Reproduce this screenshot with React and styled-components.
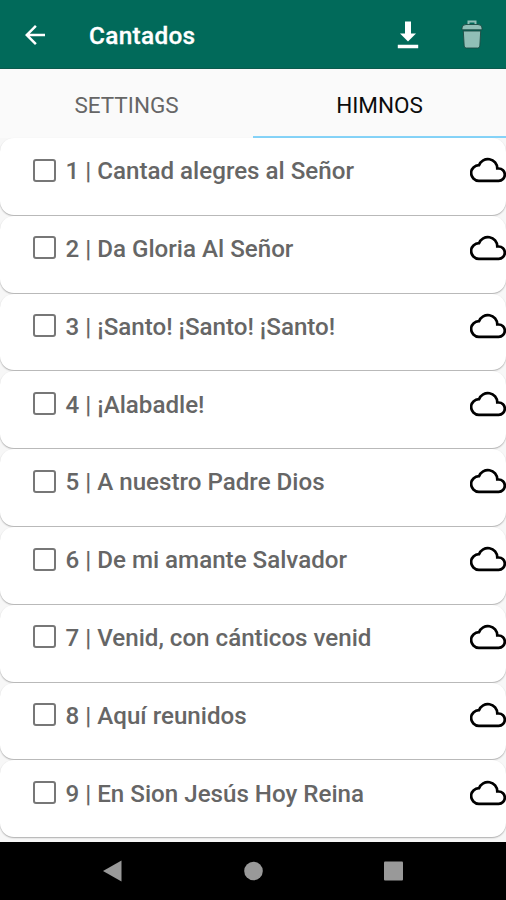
import React from 'react';
import styled, { createGlobalStyle } from 'styled-components';

const hymns = [
  { id: 1, title: 'Cantad alegres al Señor' },
  { id: 2, title: 'Da Gloria Al Señor' },
  { id: 3, title: '¡Santo! ¡Santo! ¡Santo!' },
  { id: 4, title: '¡Alabadle!' },
  { id: 5, title: 'A nuestro Padre Dios' },
  { id: 6, title: 'De mi amante Salvador' },
  { id: 7, title: 'Venid, con cánticos venid' },
  { id: 8, title: 'Aquí reunidos' },
  { id: 9, title: 'En Sion Jesús Hoy Reina' },
];

const GlobalStyle = createGlobalStyle`
  * {
    box-sizing: border-box;
  }

  body {
    margin: 0;
    font-family: Roboto, 'Liberation Sans', sans-serif;
  }
`;

const Screen = styled.div`
  display: flex;
  flex-direction: column;
  width: 506px;
  height: 900px;
  overflow: hidden;
  background: #fafafa;
`;

const Toolbar = styled.header`
  display: flex;
  align-items: center;
  flex: none;
  height: 69px;
  padding: 2px 23px 0 20px;
  background: #016a5a;
  border-bottom: 1px solid #0b5a4d;
`;

const Title = styled.h1`
  flex: 1;
  margin: 2px 0 0 39px;
  color: #fff;
  font-size: 24.4px;
  font-weight: 500;
  letter-spacing: 0.3px;
  line-height: 28px;
  -webkit-text-stroke: 0.3px #fff;
`;

const IconButton = styled.button`
  display: flex;
  padding: 0;
  margin-left: ${(props) => props.$gap || 0}px;
  border: 0;
  background: none;
`;

const Tabs = styled.nav`
  display: grid;
  grid-template-columns: 1fr 1fr;
  flex: none;
  height: 69px;
`;

const Tab = styled.button`
  padding: 4px 0 0;
  border: 0;
  border-bottom: 2px solid ${(props) => (props.$active ? '#85d3f8' : 'transparent')};
  background: none;
  color: ${(props) => (props.$active ? '#0c0c0c' : '#666')};
  font-family: inherit;
  font-size: 22.5px;
  font-weight: 400;
`;

const List = styled.ul`
  flex: 1;
  min-height: 0;
  margin: 0;
  padding: 0;
  list-style: none;
  background: #f7f7f7;
`;

const Card = styled.li`
  display: flex;
  align-items: center;
  height: 76.8px;
  margin-bottom: 1px;
  padding: 0 0 12.5px 33px;
  border-radius: 14px;
  background: #fff;
  box-shadow: 0 1px 1.5px rgba(0, 0, 0, 0.3);
`;

const Checkbox = styled.span`
  width: 23px;
  height: 23px;
  margin-right: 9.5px;
  border: 2.5px solid #777;
  border-radius: 3px;
`;

const Label = styled.span`
  flex: 1;
  padding-top: 2px;
  color: #666;
  font-size: 24.15px;
  font-weight: 500;
  line-height: 28px;
  white-space: nowrap;
`;

const NavBar = styled.footer`
  display: flex;
  align-items: center;
  flex: none;
  height: 58px;
  padding-left: 103px;
  background: #000;
`;

const BackIcon = () => (
  <svg width="30" height="30" viewBox="0 0 24 24" fill="#fff">
    <path d="M20 11H7.83l5.59-5.59L12 4l-8 8 8 8 1.41-1.41L7.83 13H20z" />
  </svg>
);

const DownloadIcon = () => (
  <svg width="22" height="30" viewBox="0 0 22 30" fill="#fff">
    <path d="M8 1.5h6v12h5l-8 8-8-8h5zM.8 24.8h20.4v3.4H.8z" />
  </svg>
);

const TrashIcon = () => (
  <svg width="22" height="32" viewBox="0 0 22 32">
    <path d="M7.5 6V2.5h7V6" fill="none" stroke="#91bfb7" strokeWidth="2" />
    <path
      d="M1 10.8V9Q1 5.500 5 5.500h12q4 0 4 3.500v1.800z"
      fill="#91bfb7"
      stroke="#1d4b43"
      strokeWidth=".9"
    />
    <path
      d="M2.300 12h17.400l-.9 15q-.2 2-2 2H5.200q-1.800 0-2-2z"
      fill="#91bfb7"
      stroke="#1d4b43"
      strokeWidth=".9"
    />
  </svg>
);

const CloudIcon = () => (
  <svg width="36" height="36" viewBox="0 0 24 24" fill="none" stroke="#000" strokeWidth="1.8">
    <path d="M5.900 19.200h13.200a4.100 4.100 0 0 0 0-8.200h-.9A6.300 6.300 0 0 0 6 8.800A5.200 5.200 0 0 0 5.900 19.200z" />
  </svg>
);

const NavIcons = () => (
  <svg width="302" height="22" viewBox="0 0 302 22" fill="#999">
    <path d="M0 11L18.500.5v21z" />
    <circle cx="150.500" cy="11" r="9.300" />
    <rect x="281" y="1.500" width="19" height="19" rx="1" />
  </svg>
);

const App = () => (
  <>
    <GlobalStyle />
    <Screen>
      <Toolbar>
        <IconButton aria-label="Back">
          <BackIcon />
        </IconButton>
        <Title>Cantados</Title>
        <IconButton aria-label="Download">
          <DownloadIcon />
        </IconButton>
        <IconButton aria-label="Delete" $gap={42}>
          <TrashIcon />
        </IconButton>
      </Toolbar>
      <Tabs>
        <Tab>SETTINGS</Tab>
        <Tab $active>HIMNOS</Tab>
      </Tabs>
      <List>
        {hymns.map((hymn) => (
          <Card key={hymn.id}>
            <Checkbox />
            <Label>
              {hymn.id} | {hymn.title}
            </Label>
            <CloudIcon />
          </Card>
        ))}
      </List>
      <NavBar>
        <NavIcons />
      </NavBar>
    </Screen>
  </>
);

export default App;
